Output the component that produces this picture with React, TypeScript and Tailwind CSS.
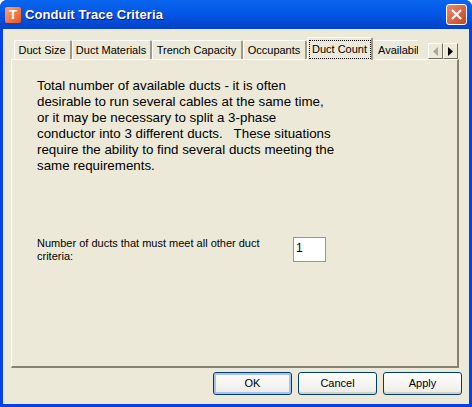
const tabs = [
  { label: "Duct Size", w: "w-[58px]" },
  { label: "Duct Materials", w: "w-[80px]" },
  { label: "Trench Capacity", w: "w-[91px]" },
  { label: "Occupants", w: "w-[64px]" },
];

function Tab({ label, w }: { label: string; w: string }) {
  return (
    <div className={`${w} flex h-[19px] shrink-0 items-center justify-center rounded-t-[2px] border-t border-l border-t-white border-l-white border-r-2 border-r-[#9d9a8a] bg-[#ece9d8] pr-px pt-px text-[11px] text-black`}>
      {label}
    </div>
  );
}

function ScrollButton({ children }: { children: React.ReactNode }) {
  return (
    <div className="flex h-[16px] w-[15px] items-center justify-center border-t border-l border-r border-b border-t-white border-l-white border-r-[#716f64] border-b-[#716f64] bg-[#ece9d8]">
      {children}
    </div>
  );
}

function Button({ label, isDefault }: { label: string; isDefault?: boolean }) {
  return (
    <button className={`h-[23px] w-[79px] rounded-[3px] border border-[#003c74] bg-gradient-to-b from-white to-[#ecebe5] text-[11px] text-black ${isDefault ? "shadow-[inset_0_0_0_2px_#a9c4ec]" : "shadow-[inset_0_-2px_0_#d6d0c5]"}`}>
      {label}
    </button>
  );
}

export default function App() {
  return (
    <div className="flex h-[407px] w-[472px] flex-col overflow-hidden rounded-t-[7px] bg-[#0740e6] font-['Liberation_Sans',sans-serif]">
      <div className="flex h-[29px] shrink-0 items-center bg-gradient-to-b from-[#0a66ee] via-[#0355e3] to-[#0441c8] pl-[5px] pr-[5px]">
        <div className="flex h-[16px] w-[16px] items-center justify-center rounded-[2px] bg-gradient-to-br from-[#ffa36c] to-[#e8501c] text-[13px] font-bold leading-none text-white">
          T
        </div>
        <span className="ml-[4px] text-[13px] font-bold tracking-[0.1px] text-white [text-shadow:1px_1px_0_#0f1089]">
          Conduit Trace Criteria
        </span>
        <div className="ml-auto flex h-[21px] w-[21px] items-center justify-center rounded-[3px] border border-white bg-gradient-to-br from-[#e88a6c] to-[#c8401c]">
          <svg width="13" height="13" viewBox="0 0 13 13">
            <path d="M2 2 L11 11 M11 2 L2 11" stroke="white" strokeWidth="2.2" />
          </svg>
        </div>
      </div>

      <div className="mx-[3px] mb-[3px] flex min-h-0 flex-1 flex-col bg-[#ece9d8] pl-[8px] pr-[10px]">
        <div className="relative mt-[9px] flex h-[21px] shrink-0 items-end pl-[3px]">
          {tabs.map((t) => (
            <Tab key={t.label} label={t.label} w={t.w} />
          ))}
          <div className="z-10 mb-[-1px] flex h-[23px] w-[66px] shrink-0 items-center justify-center rounded-t-[2px] border-t border-l border-t-white border-l-white border-r-2 border-r-[#9d9a8a] bg-[#ece9d8] text-[11px] text-black">
            <span className="flex h-[19px] w-[62px] items-center justify-center border border-dotted border-black">Duct Count</span>
          </div>
          <div className="flex h-[19px] w-[45px] shrink-0 items-center overflow-hidden whitespace-nowrap border-t border-t-white pl-[5px] pt-px text-[11px] text-black">
            Availabil
          </div>
          <div className="absolute right-[1px] top-[5px] flex">
            <ScrollButton>
              <svg width="5" height="9" viewBox="0 0 5 9"><path d="M5 0 L0 4.5 L5 9 Z" fill="#aca899" /></svg>
            </ScrollButton>
            <ScrollButton>
              <svg width="5" height="9" viewBox="0 0 5 9"><path d="M0 0 L5 4.5 L0 9 Z" fill="black" /></svg>
            </ScrollButton>
          </div>
        </div>

        <div className="flex h-[309px] shrink-0 flex-col border-t border-l border-t-white border-l-white border-r-2 border-b-2 border-r-[#85836f] border-b-[#85836f] bg-[#ece9d8] pl-[25px]">
          <p className="mt-[18px] w-[300px] text-[13.33px] leading-[16px] text-black">
            Total number of available ducts - it is often desirable to run several cables at the same time, or it may be necessary to split a 3-phase conductor into 3 different ducts.&nbsp;&nbsp; These situations require the ability to find several ducts meeting the same requirements.
          </p>
          <div className="mt-[63px] flex items-start">
            <p className="w-[246px] text-[11px] leading-[13px] text-black">
              Number of ducts that must meet all other duct criteria:
            </p>
            <div className="ml-[10px] flex h-[25px] w-[33px] items-start border border-[#7f9db9] bg-white px-[2px] pt-[3px] text-[12px] leading-[15px] text-black">
              1
            </div>
          </div>
        </div>

        <div className="mr-[-3px] mt-[4px] flex justify-end gap-[6px]">
          <Button label="OK" isDefault />
          <Button label="Cancel" />
          <Button label="Apply" />
        </div>
      </div>
    </div>
  );
}
